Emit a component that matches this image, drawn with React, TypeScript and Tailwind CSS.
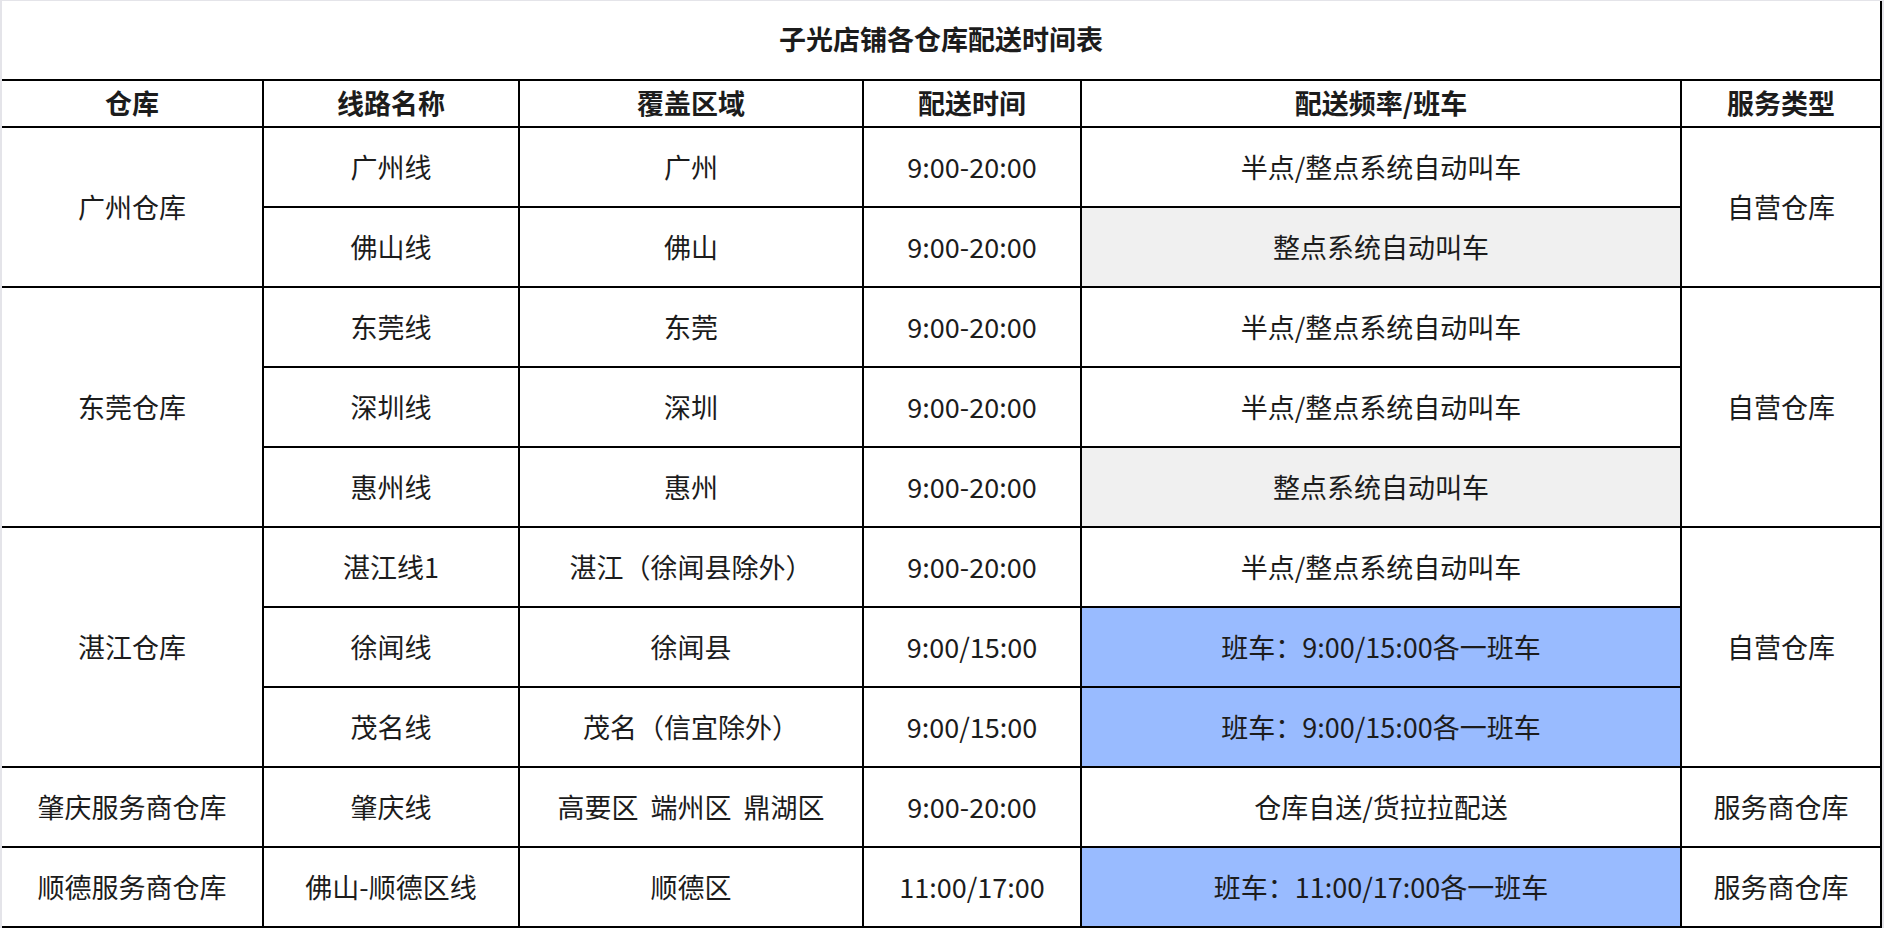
import React from 'react';

type Cell = {
  text: string;
  span?: number;
  bg?: string;
};

type Row = {
  warehouse?: Cell;
  line: string;
  area: string;
  time: string;
  freq: Cell;
  service?: Cell;
};

const GRAY = 'gray';
const BLUE = 'blue';

const rows: Row[] = [
  { warehouse: { text: '广州仓库', span: 2 }, line: '广州线', area: '广州', time: '9:00-20:00', freq: { text: '半点/整点系统自动叫车' }, service: { text: '自营仓库', span: 2 } },
  { line: '佛山线', area: '佛山', time: '9:00-20:00', freq: { text: '整点系统自动叫车', bg: GRAY } },
  { warehouse: { text: '东莞仓库', span: 3 }, line: '东莞线', area: '东莞', time: '9:00-20:00', freq: { text: '半点/整点系统自动叫车' }, service: { text: '自营仓库', span: 3 } },
  { line: '深圳线', area: '深圳', time: '9:00-20:00', freq: { text: '半点/整点系统自动叫车' } },
  { line: '惠州线', area: '惠州', time: '9:00-20:00', freq: { text: '整点系统自动叫车', bg: GRAY } },
  { warehouse: { text: '湛江仓库', span: 3 }, line: '湛江线1', area: '湛江（徐闻县除外）', time: '9:00-20:00', freq: { text: '半点/整点系统自动叫车' }, service: { text: '自营仓库', span: 3 } },
  { line: '徐闻线', area: '徐闻县', time: '9:00/15:00', freq: { text: '班车：9:00/15:00各一班车', bg: BLUE } },
  { line: '茂名线', area: '茂名（信宜除外）', time: '9:00/15:00', freq: { text: '班车：9:00/15:00各一班车', bg: BLUE } },
  { warehouse: { text: '肇庆服务商仓库' }, line: '肇庆线', area: '高要区  端州区  鼎湖区', time: '9:00-20:00', freq: { text: '仓库自送/货拉拉配送' }, service: { text: '服务商仓库' } },
  { warehouse: { text: '顺德服务商仓库' }, line: '佛山-顺德区线', area: '顺德区', time: '11:00/17:00', freq: { text: '班车：11:00/17:00各一班车', bg: BLUE }, service: { text: '服务商仓库' } },
];

const headers = ['仓库', '线路名称', '覆盖区域', '配送时间', '配送频率/班车', '服务类型'];

// 行跨度只有 1~3，类名写全
const spanClass = (span?: number) => {
  if (span === 2) return 'row-span-2';
  if (span === 3) return 'row-span-3';
  return '';
};

const bgClass = (bg?: string) => {
  if (bg === GRAY) return 'bg-[#f0f0f0]';
  if (bg === BLUE) return 'bg-[#99bbff]';
  return 'bg-white';
};

const Td: React.FC<{ children: React.ReactNode; className?: string }> = ({ children, className = '' }) => (
  <div className={`flex items-center justify-center whitespace-pre ${className}`}>{children}</div>
);

export default function App() {
  return (
    <div className="min-h-screen bg-[#e4e4e9] pt-px pl-[2px] pr-[2px] font-['Noto_Sans_CJK_SC','Liberation_Sans',sans-serif] text-[27px] text-[#1c1c1c]">
      <div className="flex flex-col gap-[2px] bg-black pr-[2px] pb-[2px]">
        {/* 标题 */}
        <div className="flex h-[78px] items-center justify-center bg-white pb-px font-bold">
          子光店铺各仓库配送时间表
        </div>

        <div className="grid grid-cols-[260px_254px_342px_216px_598px_198px] grid-rows-[45px_repeat(10,78px)] gap-[2px]">
          {headers.map((h) => (
            <Td key={h} className="bg-white font-bold">{h}</Td>
          ))}

          {rows.map((r, i) => (
            <React.Fragment key={i}>
              {r.warehouse && (
                <Td className={`bg-white ${spanClass(r.warehouse.span)}`}>{r.warehouse.text}</Td>
              )}
              <Td className="bg-white">{r.line}</Td>
              <Td className="bg-white">{r.area}</Td>
              <Td className="bg-white">{r.time}</Td>
              <Td className={bgClass(r.freq.bg)}>{r.freq.text}</Td>
              {r.service && (
                <Td className={`bg-white ${spanClass(r.service.span)}`}>{r.service.text}</Td>
              )}
            </React.Fragment>
          ))}
        </div>
      </div>
    </div>
  );
}
